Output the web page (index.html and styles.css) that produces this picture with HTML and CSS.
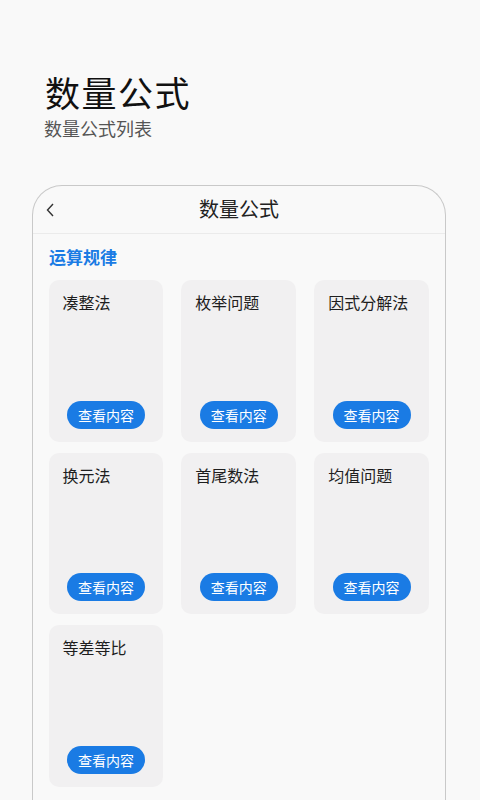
FILE: index.html
```html
<!DOCTYPE html>
<html lang="zh-CN">
<head>
    <meta charset="UTF-8">
    <meta name="viewport" content="width=device-width, initial-scale=1.0">
    <title>数量公式</title>
    <link rel="stylesheet" href="styles.css">
</head>
<body>
    <div class="page-head">
        <h1>数量公式</h1>
        <p class="subtitle">数量公式列表</p>
    </div>

    <div class="phone">
        <div class="nav-bar">
            <svg class="back" width="8" height="14" viewBox="0 0 8 14">
                <path d="M7 1 L1.5 7 L7 13" fill="none" stroke="#333" stroke-width="1.4"/>
            </svg>
            <span class="nav-title">数量公式</span>
        </div>

        <h2 class="section-title">运算规律</h2>

        <div class="card-grid">
            <div class="card">
                <span class="card-title">凑整法</span>
                <button class="view-btn">查看内容</button>
            </div>
            <div class="card">
                <span class="card-title">枚举问题</span>
                <button class="view-btn">查看内容</button>
            </div>
            <div class="card">
                <span class="card-title">因式分解法</span>
                <button class="view-btn">查看内容</button>
            </div>
            <div class="card">
                <span class="card-title">换元法</span>
                <button class="view-btn">查看内容</button>
            </div>
            <div class="card">
                <span class="card-title">首尾数法</span>
                <button class="view-btn">查看内容</button>
            </div>
            <div class="card">
                <span class="card-title">均值问题</span>
                <button class="view-btn">查看内容</button>
            </div>
            <div class="card">
                <span class="card-title">等差等比</span>
                <button class="view-btn">查看内容</button>
            </div>
        </div>
    </div>
</body>
</html>
```

FILE: styles.css
```css
:root {
    --primary: #1a7be4;
    --card: #f1f0f1;
    --bg: #f9f9f9;
    --dark: #1c1c1c;
    --border: #c9c9c9;
}

* {
    box-sizing: border-box;
    margin: 0;
    padding: 0;
    font-family: "Noto Sans CJK SC", "Noto Sans", sans-serif;
}

body {
    background-color: var(--bg);
    color: var(--dark);
    height: 800px;
    overflow: hidden;
}

.page-head {
    padding: 68px 0 0 45px;
}

h1 {
    font-size: 35px;
    font-weight: 400;
    line-height: 48px;
    letter-spacing: 1.5px;
    color: #111;
}

.subtitle {
    font-size: 18px;
    line-height: 24px;
    color: #555;
    margin-top: 0;
    margin-left: -1px;
}

.phone {
    margin: 45px 0 0 32px;
    width: 414px;
    height: 700px;
    border: 1.5px solid var(--border);
    border-bottom: none;
    border-radius: 30px 30px 0 0;
}

.nav-bar {
    position: relative;
    height: 48px;
    border-bottom: 1px solid #ebebeb;
    display: flex;
    align-items: center;
    justify-content: center;
}

.back {
    position: absolute;
    left: 13px;
    top: 17px;
}

.nav-title {
    font-size: 20px;
    color: #222;
    margin-top: -3px;
}

.section-title {
    font-size: 17px;
    font-weight: 700;
    color: var(--primary);
    line-height: 24px;
    padding: 11px 0 0 16px;
    margin-bottom: 11px;
}

.card-grid {
    display: grid;
    grid-template-columns: repeat(3, 1fr);
    column-gap: 18px;
    row-gap: 11px;
    padding: 0 16px 0 15.5px;
}

.card {
    background-color: var(--card);
    border-radius: 10px;
    height: 161.5px;
    padding: 10px 0 13px 14px;
    display: flex;
    flex-direction: column;
    justify-content: space-between;
}

.card-title {
    font-size: 16px;
    line-height: 24px;
    color: #1e1e1e;
}

.view-btn {
    align-self: center;
    margin-left: -14px;
    width: 78px;
    height: 28px;
    border: none;
    border-radius: 14px;
    background-color: var(--primary);
    color: white;
    font-size: 14px;
}
```
